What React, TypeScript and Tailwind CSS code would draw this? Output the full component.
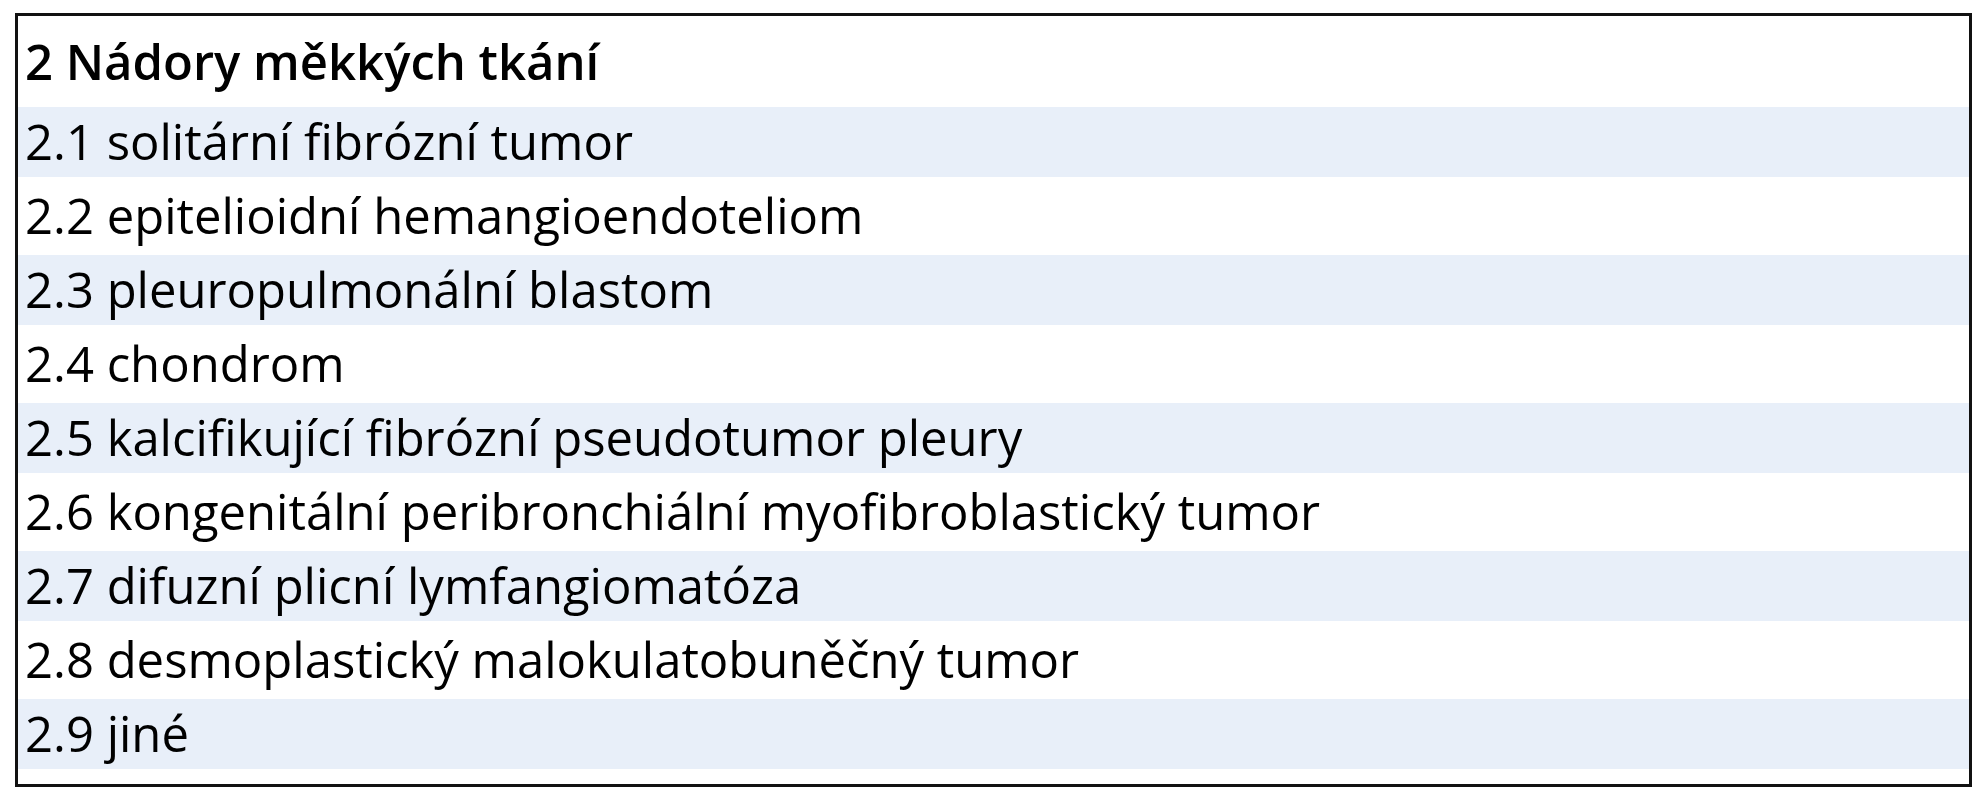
const rows = [
  "2.1 solitární fibrózní tumor",
  "2.2 epitelioidní hemangioendoteliom",
  "2.3 pleuropulmonální blastom",
  "2.4 chondrom",
  "2.5 kalcifikující fibrózní pseudotumor pleury",
  "2.6 kongenitální peribronchiální myofibroblastický tumor",
  "2.7 difuzní plicní lymfangiomatóza",
  "2.8 desmoplastický malokulatobuněčný tumor",
  "2.9 jiné",
];

export default function App() {
  return (
    <div className="h-[800px] w-[1988px] bg-white pl-[15px] pt-[13px] font-['Open_Sans',sans-serif] text-black">
      <div className="flex h-[774px] w-[1957px] flex-col border-[3px] border-[#111]">
        <div className="flex h-[91px] items-center pl-[7px] text-[49px] font-semibold">
          2 Nádory měkkých tkání
        </div>
        {rows.map((label, i) => (
          <div
            key={label}
            className={
              i % 2 === 0
                ? "flex h-[70px] items-center bg-[#e8eff9] pl-[7px] text-[49px]"
                : "flex h-[78px] items-center pl-[7px] text-[49px]"
            }
          >
            {label}
          </div>
        ))}
      </div>
    </div>
  );
}
